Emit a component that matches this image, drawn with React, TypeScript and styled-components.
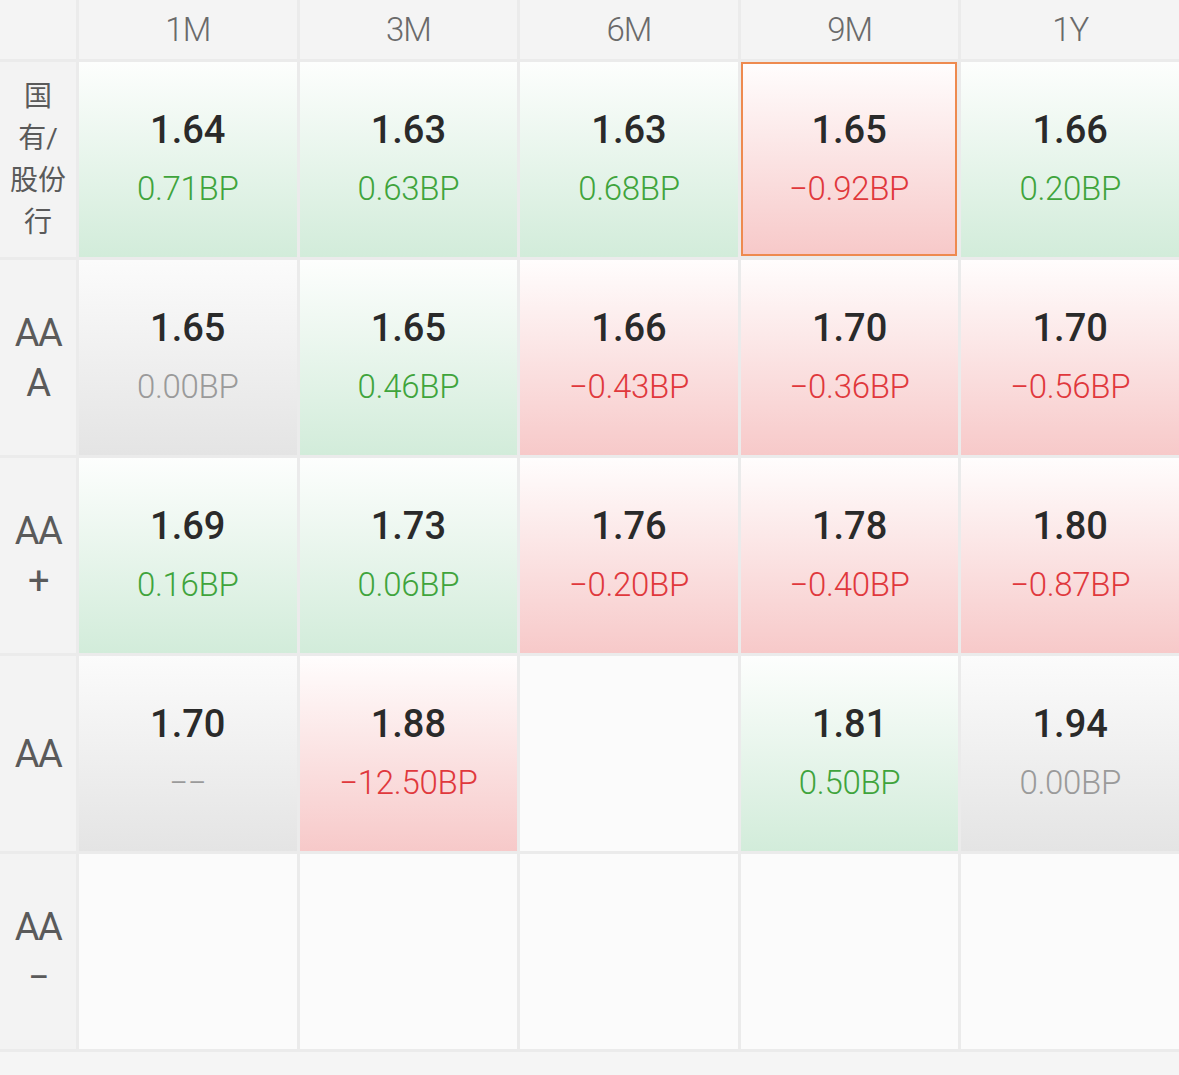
import styled, { createGlobalStyle, css } from "styled-components"

type Tone = "up" | "down" | "flat" | "empty"

interface ICell {
    value?: string;
    change?: string;
    tone: Tone;
    selected?: boolean;
}

interface IRow {
    label: string[];
    tight?: boolean;
    cells: ICell[];
}

const GlobalStyle = createGlobalStyle`
    html, body {
        margin: 0;
        padding: 0;
        background-color: #f5f5f5;
        font-family: Roboto, "Noto Sans CJK SC", sans-serif;
    }
`

const Table = styled.div`
    display: grid;
    width: 1179px;
    grid-template-columns: 76px repeat(5, 1fr);
    grid-template-rows: 59px repeat(5, 195px);
    gap: 3px;
    background-color: #ebebeb;
    border-bottom: 3px solid #ebebeb;
`

const HeadCell = styled.div`
    display: flex;
    align-items: center;
    justify-content: center;
    background-color: #f4f4f4;
    color: #6a6a6a;
    font-size: 33px;
    font-weight: 300;
    letter-spacing: -1px;
`

const LabelCell = styled.div<{ $tight?: boolean }>`
    display: flex;
    flex-direction: column;
    align-items: center;
    justify-content: center;
    background-color: #f3f3f3;
    color: #5a5a5a;
    font-size: ${p => p.$tight ? "28px" : "38px"};
    line-height: ${p => p.$tight ? "42px" : "50px"};
    letter-spacing: ${p => p.$tight ? "0" : "-1.5px"};
`

const tones = {
    up: css`background: linear-gradient(180deg, #fdfefd 0%, #d2ecda 100%);`,
    down: css`background: linear-gradient(180deg, #fffdfd 0%, #f7c9c9 100%);`,
    flat: css`background: linear-gradient(180deg, #fbfbfb 0%, #e4e4e4 100%);`,
    empty: css`background: #fbfbfb;`,
}

const DataCell = styled.div<{ $tone: Tone; $selected?: boolean }>`
    display: flex;
    flex-direction: column;
    align-items: center;
    justify-content: center;
    gap: 15px;
    box-sizing: border-box;
    ${p => tones[p.$tone]}
    ${p => p.$selected && css`
        border: 2px solid #ee8a4f;
        margin: 0 1px 1px 0;
    `}
`

const Value = styled.span`
    color: #2a2a2a;
    font-size: 38px;
    font-weight: 500;
    line-height: 44px;
`

const changeColors: Record<Tone, string> = {
    up: "#3fa43c",
    down: "#e0383c",
    flat: "#9a9a9a",
    empty: "#9a9a9a",
}

const Change = styled.span<{ $tone: Tone }>`
    color: ${p => changeColors[p.$tone]};
    font-size: 33px;
    font-weight: 300;
    line-height: 44px;
    letter-spacing: -0.3px;
`

const columns = ["1M", "3M", "6M", "9M", "1Y"]

const rows: IRow[] = [
    {
        label: ["国", "有/", "股份", "行"],
        tight: true,
        cells: [
            { value: "1.64", change: "0.71BP", tone: "up" },
            { value: "1.63", change: "0.63BP", tone: "up" },
            { value: "1.63", change: "0.68BP", tone: "up" },
            { value: "1.65", change: "−0.92BP", tone: "down", selected: true },
            { value: "1.66", change: "0.20BP", tone: "up" },
        ],
    },
    {
        label: ["AA", "A"],
        cells: [
            { value: "1.65", change: "0.00BP", tone: "flat" },
            { value: "1.65", change: "0.46BP", tone: "up" },
            { value: "1.66", change: "−0.43BP", tone: "down" },
            { value: "1.70", change: "−0.36BP", tone: "down" },
            { value: "1.70", change: "−0.56BP", tone: "down" },
        ],
    },
    {
        label: ["AA", "+"],
        cells: [
            { value: "1.69", change: "0.16BP", tone: "up" },
            { value: "1.73", change: "0.06BP", tone: "up" },
            { value: "1.76", change: "−0.20BP", tone: "down" },
            { value: "1.78", change: "−0.40BP", tone: "down" },
            { value: "1.80", change: "−0.87BP", tone: "down" },
        ],
    },
    {
        label: ["AA"],
        cells: [
            { value: "1.70", change: "−−", tone: "flat" },
            { value: "1.88", change: "−12.50BP", tone: "down" },
            { tone: "empty" },
            { value: "1.81", change: "0.50BP", tone: "up" },
            { value: "1.94", change: "0.00BP", tone: "flat" },
        ],
    },
    {
        label: ["AA", "−"],
        cells: [
            { tone: "empty" },
            { tone: "empty" },
            { tone: "empty" },
            { tone: "empty" },
            { tone: "empty" },
        ],
    },
]

export default function App() {
    return (
        <>
            <GlobalStyle />
            <Table>
                <HeadCell />
                {columns.map(c => <HeadCell key={c}>{c}</HeadCell>)}
                {rows.map((row, i) => (
                    <Row key={i} row={row} />
                ))}
            </Table>
        </>
    )
}

const Row = ({ row }: { row: IRow }) => {
    return (
        <>
            <LabelCell $tight={row.tight}>
                {row.label.map((l, j) => <span key={j}>{l}</span>)}
            </LabelCell>
            {row.cells.map((cell, j) => (
                <DataCell key={j} $tone={cell.tone} $selected={cell.selected}>
                    {cell.value && <Value>{cell.value}</Value>}
                    {cell.change && <Change $tone={cell.tone}>{cell.change}</Change>}
                </DataCell>
            ))}
        </>
    )
}
